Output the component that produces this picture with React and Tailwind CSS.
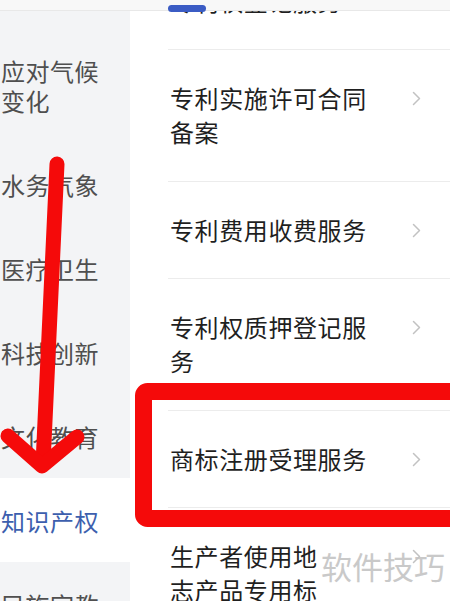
import React from 'react'

const font = { fontFamily: '"Noto Sans CJK SC", "Noto Sans", sans-serif' }

const sideItems = [
  { lines: ['应对气候', '变化'] },
  { lines: ['水务气象'] },
  { lines: ['医疗卫生'] },
  { lines: ['科技创新'] },
  { lines: ['文化教育'] },
  { lines: ['知识产权'], active: true },
  { lines: ['民族宗教'] },
]

const services = [
  ['专利实施许可合同', '备案'],
  ['专利费用收费服务'],
  ['专利权质押登记服', '务'],
  ['商标注册受理服务'],
  ['生产者使用地', '志产品专用标'],
]

const Chevron = () => (
  <div className="h-[34px] flex items-center">
    <svg width="9" height="15" viewBox="0 0 9 15" fill="none">
      <path d="M1.5 1.5 L7.5 7.5 L1.5 13.5" stroke="#c2c2c2" strokeWidth="1.5" strokeLinecap="round" strokeLinejoin="round" />
    </svg>
  </div>
)

const App = () => {
  return (
    <div className="relative w-[450px] h-[601px] overflow-hidden bg-white" style={font}>
      {/* Top strip with tab indicator */}
      <div className="relative h-[11px] bg-[#f8f8f8] border-b border-[#e8e8e8]">
        <div className="absolute left-[168px] top-[5px] w-[38px] h-[7px] rounded-full bg-[#3b5cc4]" />
      </div>

      <div className="flex">
        {/* Sidebar */}
        <div className="w-[130px] shrink-0 bg-[#f3f4f6]">
          <div className="h-[17px]" />
          {sideItems.map((item, i) => (
            <div
              key={i}
              className={
                'flex flex-col justify-center pl-[1px] pt-[2px] text-[24px] tracking-[0.5px] leading-[30px] ' +
                (item.lines.length > 1 ? 'h-[114px] ' : 'h-[84px] ') +
                (item.active ? 'bg-white text-[#3d5fae]' : 'text-[#4f4f4f]')
              }
            >
              {item.lines.map((l, j) => (
                <span key={j}>{l}</span>
              ))}
            </div>
          ))}
        </div>

        {/* Service list */}
        <div className="flex-1 bg-white">
          <div className="ml-[38px] h-[39px] overflow-hidden border-b border-[#ececec] flex items-end pb-[31px] pl-[2px]">
            <span className="text-[24px] leading-[34px] tracking-[0.6px] text-[#1f1f1f]">专利权登记服务</span>
          </div>
          {services.map((lines, i) => (
            <div
              key={i}
              className={
                'ml-[38px] border-b border-[#ececec] pt-[31px] pl-[2px] pr-[29px] flex items-start justify-between ' +
                (lines.length > 1 ? 'pb-[32px]' : 'pb-[31px]')
              }
            >
              <div className="text-[24px] leading-[34px] tracking-[0.6px] text-[#1f1f1f]">
                {lines.map((l, j) => (
                  <div key={j}>{l}</div>
                ))}
              </div>
              <Chevron />
            </div>
          ))}
        </div>
      </div>

      {/* Annotations */}
      <svg className="absolute inset-0 pointer-events-none" width="450" height="601" viewBox="0 0 450 601">
        <path d="M57 164 L43 464" stroke="#f50a0a" strokeWidth="15" strokeLinecap="round" />
        <path d="M8 436 L42 466 L77 437" stroke="#f50a0a" strokeWidth="15" strokeLinecap="round" strokeLinejoin="round" fill="none" />
        <rect x="143.5" y="391.5" width="330" height="127" rx="4" stroke="#f50a0a" strokeWidth="17" fill="none" />
      </svg>

      <div className="absolute left-[321px] top-[546px] text-[31px] leading-[40px] text-[#c4c4c4] opacity-90 pointer-events-none">
        软件技巧
      </div>
    </div>
  )
}

export default App
